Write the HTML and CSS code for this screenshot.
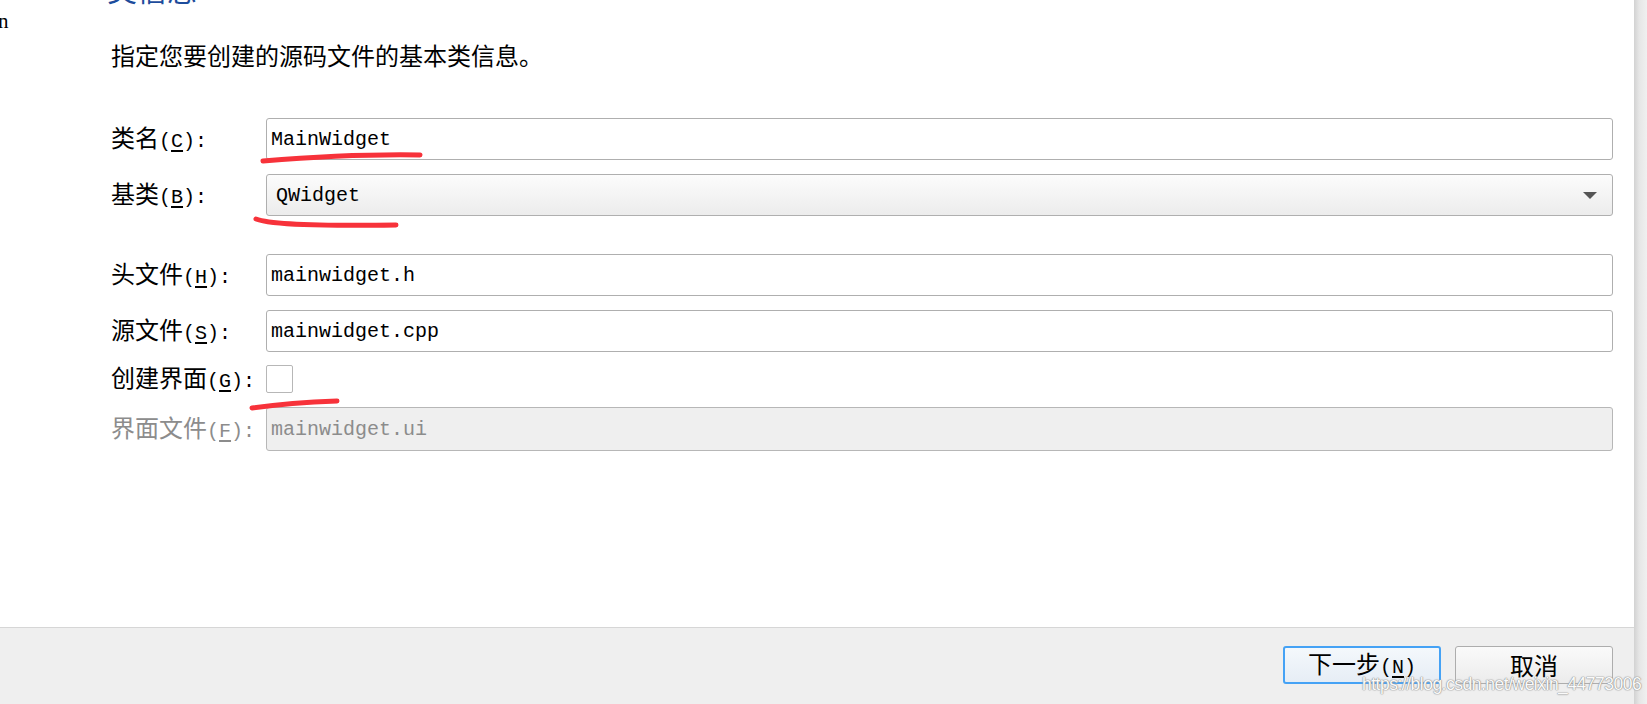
FILE: index.html
```html
<!DOCTYPE html>
<html lang="zh-CN">
<head>
<meta charset="utf-8">
<title>类信息</title>
<link rel="stylesheet" href="styles.css">
</head>
<body>
<div class="window">
  <div class="main">
    <aside class="side"><span class="side-text">n</span></aside>
    <section class="page">
      <h1 class="title">类信息</h1>
      <p class="desc">指定您要创建的源码文件的基本类信息。</p>
      <div class="form">
        <div class="row">
          <label class="label">类名<span class="lat">(<u>C</u>):</span></label>
          <div class="field input">MainWidget</div>
        </div>
        <div class="row">
          <label class="label">基类<span class="lat">(<u>B</u>):</span></label>
          <div class="field combo">QWidget<span class="arrow"></span></div>
        </div>
        <div class="row group">
          <label class="label">头文件<span class="lat">(<u>H</u>):</span></label>
          <div class="field input">mainwidget.h</div>
        </div>
        <div class="row">
          <label class="label">源文件<span class="lat">(<u>S</u>):</span></label>
          <div class="field input">mainwidget.cpp</div>
        </div>
        <div class="row check-row">
          <label class="label">创建界面<span class="lat">(<u>G</u>):</span></label>
          <div class="checkbox"></div>
        </div>
        <div class="row disabled">
          <label class="label">界面文件<span class="lat">(<u>F</u>):</span></label>
          <div class="field input">mainwidget.ui</div>
        </div>
      </div>
    </section>
  </div>
  <footer class="footer">
    <button class="btn primary">下一步<span class="lat">(<u>N</u>)</span></button>
    <button class="btn">取消</button>
  </footer>
  <svg class="marks" width="1634" height="704" viewBox="0 0 1634 704">
    <path d="M263 161 C 300 158, 360 154, 420 155" />
    <path d="M256 219 C 272 225, 320 226, 396 225" />
    <path d="M252 408 C 280 404, 310 402, 337 401" />
  </svg>
  <div class="watermark">https://blog.csdn.net/weixin_44773006</div>
</div>
<div class="shadow"></div>
</body>
</html>
```
FILE: styles.css
```css
html, body {
  margin: 0;
  padding: 0;
}
body {
  width: 1647px;
  height: 704px;
  overflow: hidden;
  display: flex;
  background: #ffffff;
  font-family: "Noto Sans CJK SC", sans-serif;
  color: #000;
}
.window {
  position: relative;
  width: 1634px;
  height: 704px;
  display: flex;
  flex-direction: column;
  background: #fff;
}
.shadow {
  width: 13px;
  height: 704px;
  background: linear-gradient(to right, #d2d2d2, #e6e6e6 40%, #f0f0f0);
}
.main {
  flex: 1;
  display: flex;
  min-height: 0;
}
.side {
  width: 111px;
  flex: none;
  overflow: hidden;
}
.side-text {
  display: block;
  margin-top: 8px;
  margin-left: -2px;
  font-family: "Liberation Serif", serif;
  font-size: 21px;
  line-height: 26px;
}
.page {
  flex: 1;
  padding-right: 21px;
}
.title {
  margin: -27px 0 0 -4px;
  font-size: 30px;
  line-height: 30px;
  font-weight: normal;
  color: #1d4c9c;
  height: 30px;
}
.desc {
  margin: 37px 0 0 0;
  font-size: 24px;
  line-height: 30px;
  height: 30px;
}
.lat {
  font-family: "Liberation Mono", monospace;
  font-size: 20px;
}
.lat u {
  text-underline-offset: 3px;
}
.form {
  margin-top: 48px;
  display: flex;
  flex-direction: column;
  gap: 14px;
}
.row {
  display: flex;
  align-items: center;
  height: 42px;
}
.row.group {
  margin-top: 24px;
}
.row.check-row {
  height: 28px;
  margin-top: -1px;
}
.label {
  width: 155px;
  flex: none;
  font-size: 24px;
  line-height: 30px;
  white-space: nowrap;
}
.field {
  flex: 1;
  height: 42px;
  box-sizing: border-box;
  border: 1px solid #afafaf;
  border-radius: 3px;
  font-family: "Liberation Mono", monospace;
  font-size: 20px;
  display: flex;
  align-items: center;
  white-space: nowrap;
}
.input {
  padding-left: 4px;
  background: #fff;
}
.combo {
  position: relative;
  padding-left: 9px;
  background: linear-gradient(to bottom, #fcfcfc, #ececec);
}
.arrow {
  position: absolute;
  right: 15px;
  top: 17px;
  width: 0;
  height: 0;
  border-left: 7px solid transparent;
  border-right: 7px solid transparent;
  border-top: 7px solid #555;
}
.checkbox {
  width: 27px;
  height: 28px;
  box-sizing: border-box;
  border: 1px solid #b7b7b7;
  border-radius: 2px;
  background: #fff;
}
.row.disabled {
  height: 44px;
}
.disabled .label {
  color: #8c8c8c;
}
.disabled .field {
  height: 44px;
  background: #efefef;
  color: #8c8c8c;
  border-color: #b7b7b7;
}
.footer {
  height: 77px;
  flex: none;
  box-sizing: border-box;
  border-top: 1px solid #d6d6d6;
  background: #efefef;
  display: flex;
  justify-content: flex-end;
  align-items: flex-start;
  gap: 14px;
  padding: 18px 21px 0 0;
}
.btn {
  width: 158px;
  height: 38px;
  box-sizing: border-box;
  border: 1px solid #adadad;
  border-radius: 3px;
  background: linear-gradient(to bottom, #fafafa, #ececec);
  font-family: "Noto Sans CJK SC", sans-serif;
  font-size: 24px;
  line-height: 30px;
  color: #000;
  padding: 0;
}
.btn.primary {
  border: 2px solid #45a2f5;
  background: linear-gradient(to bottom, #f4f8fc, #e6edf5);
}
.marks {
  position: absolute;
  left: 0;
  top: 0;
  pointer-events: none;
}
.marks path {
  fill: none;
  stroke: #f7323a;
  stroke-width: 5;
  stroke-linecap: round;
}
.watermark {
  position: absolute;
  left: 1362px;
  top: 674px;
  font-family: "Liberation Sans", sans-serif;
  font-size: 17.5px;
  letter-spacing: -0.5px;
  line-height: 20px;
  color: #fafafa;
  text-shadow: 0 0 1px #8a8a8a, 0 0 1px #8a8a8a, 0 0 2px #b8b8b8;
  white-space: nowrap;
  pointer-events: none;
}
```
